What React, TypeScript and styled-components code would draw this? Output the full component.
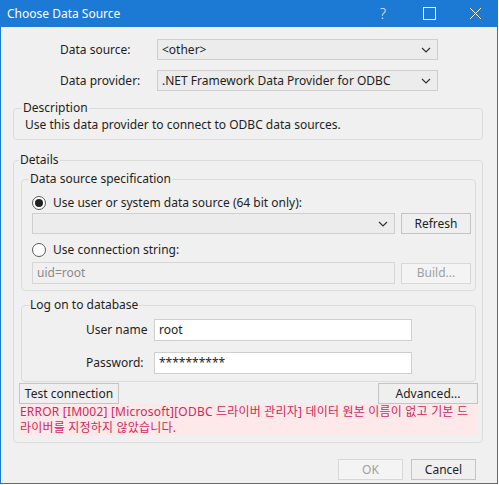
import React from "react";
import styled, { createGlobalStyle } from "styled-components";

const Global = createGlobalStyle`
  html, body { margin: 0; padding: 0; background: #ffffff; }
  body { font-family: "Noto Sans", "Noto Sans CJK KR", sans-serif; font-size: 12px; line-height: 16px; color: #1e1e1e; }
  * { box-sizing: border-box; }
`;

const Window = styled.div`
  width: 498px;
  height: 484px;
  border: 1px solid #1c79d4;
  border-top: none;
  background: #f0f0f0;
  display: flex;
  flex-direction: column;
  overflow: hidden;
`;

const TitleBar = styled.div`
  height: 27px;
  flex-shrink: 0;
  background: #1c79d4;
  color: #fff;
  display: flex;
  align-items: center;
  padding-left: 7px;
  margin: 0 -1px;
`;

const Title = styled.div`
  flex: 1;
  font-size: 12px;
`;

const TitleBtn = styled.div`
  width: 46px;
  height: 27px;
  display: flex;
  align-items: center;
  justify-content: center;
  color: #e8f1fb;
  font-size: 14px;
  font-weight: 300;
`;

const Body = styled.div`
  flex: 1;
  display: flex;
  flex-direction: column;
  padding: 12px 14px 0 12px;
`;

const FormGrid = styled.div`
  display: grid;
  grid-template-columns: 97px 281px;
  row-gap: 10px;
  padding-left: 47px;
  align-items: center;
`;

const Label = styled.div`
  color: #1e1e1e;
`;

const Combo = styled.div<{ $w?: number }>`
  height: 21px;
  width: ${(p) => (p.$w ? `${p.$w}px` : "auto")};
  border: 1px solid #cfcfcf;
  background: #ececec;
  display: flex;
  align-items: center;
  padding: 0 6px 0 4px;
  flex-shrink: 0;
`;

const ComboText = styled.div`
  flex: 1;
`;

const Group = styled.fieldset<{ $mt: number; $pad: string; $mx?: number }>`
  margin: ${(p) => p.$mt}px ${(p) => p.$mx ?? 0}px 0 ${(p) => p.$mx ?? 0}px;
  padding: ${(p) => p.$pad};
  border: 1px solid #dcdcdc;
  border-radius: 4px;
  min-width: 0;
`;

const Legend = styled.legend`
  padding: 0 1px;
  margin-left: 0;
  font-size: 12px;
  line-height: 14px;
`;

const DescText = styled.div`
  padding: 2px 0 0 3px;
`;

const Row = styled.div<{ $mt: number }>`
  display: flex;
  align-items: center;
  gap: 6px;
  margin-top: ${(p) => p.$mt}px;
`;

const RadioRow = styled.label<{ $mt?: number }>`
  display: flex;
  align-items: center;
  gap: 7px;
  height: 16px;
  margin-top: ${(p) => p.$mt ?? 0}px;
`;

const RadioCircle = styled.span<{ $on?: boolean }>`
  width: 14px;
  height: 14px;
  border-radius: 50%;
  border: 1px solid #5a5a5a;
  background: #fff;
  display: flex;
  align-items: center;
  justify-content: center;
  &::after {
    content: "";
    width: 8px;
    height: 8px;
    border-radius: 50%;
    background: #222;
    display: ${(p) => (p.$on ? "block" : "none")};
  }
`;

const Button = styled.div<{ $w: number; $disabled?: boolean }>`
  width: ${(p) => p.$w}px;
  height: 21px;
  border: 1px solid ${(p) => (p.$disabled ? "#d8d8d8" : "#c4c4c4")};
  background: ${(p) => (p.$disabled ? "#f4f4f4" : "#efefef")};
  color: ${(p) => (p.$disabled ? "#a0a0a0" : "#1e1e1e")};
  display: flex;
  align-items: center;
  justify-content: center;
  flex-shrink: 0;
`;

const TextBox = styled.div<{ $w: number; $disabled?: boolean }>`
  width: ${(p) => p.$w}px;
  height: 22px;
  border: 1px solid ${(p) => (p.$disabled ? "#d6d6d6" : "#cfcfcf")};
  background: ${(p) => (p.$disabled ? "#f0f0f0" : "#ffffff")};
  color: ${(p) => (p.$disabled ? "#8a8a8a" : "#1e1e1e")};
  display: flex;
  align-items: center;
  padding-left: 4px;
  flex-shrink: 0;
`;

const SpecBody = styled.div`
  display: flex;
  flex-direction: column;
  padding: 9px 0 0 3px;
`;

const LoginGrid = styled.div`
  display: grid;
  grid-template-columns: 68px 258px;
  row-gap: 11px;
  padding: 7px 0 0 57px;
  align-items: center;
`;

const ActionRow = styled.div`
  display: flex;
  justify-content: space-between;
  margin-top: 1px;
`;

const ErrorBox = styled.div`
  background: #fde8ea;
  color: #d3285a;
  padding: 0 1px 0 1px;
  line-height: 16px;
  height: 32px;
  word-break: break-all;
  letter-spacing: 0.2px;
`;

const Footer = styled.div`
  display: flex;
  justify-content: flex-end;
  gap: 8px;
  margin-top: 16px;
  padding-right: 7px;
`;

const Chevron = () => (
  <svg width="10" height="6" viewBox="0 0 10 6">
    <path d="M1 1 L5 5 L9 1" fill="none" stroke="#333" strokeWidth="1.2" />
  </svg>
);

export default function App() {
  return (
    <>
      <Global />
      <Window>
        <TitleBar>
          <Title>Choose Data Source</Title>
          <TitleBtn>?</TitleBtn>
          <TitleBtn>
            <svg width="13" height="13" viewBox="0 0 13 13">
              <rect x="0.5" y="0.5" width="12" height="12" fill="none" stroke="#fff" strokeWidth="1" />
            </svg>
          </TitleBtn>
          <TitleBtn>
            <svg width="13" height="13" viewBox="0 0 13 13">
              <path d="M1 1 L12 12 M12 1 L1 12" stroke="#fff" strokeWidth="1" />
            </svg>
          </TitleBtn>
        </TitleBar>
        <Body>
          <FormGrid>
            <Label>Data source:</Label>
            <Combo>
              <ComboText>&lt;other&gt;</ComboText>
              <Chevron />
            </Combo>
            <Label>Data provider:</Label>
            <Combo>
              <ComboText>.NET Framework Data Provider for ODBC</ComboText>
              <Chevron />
            </Combo>
          </FormGrid>

          <Group $mt={10} $pad="0 8px 6px 8px">
            <Legend>Description</Legend>
            <DescText>Use this data provider to connect to ODBC data sources.</DescText>
          </Group>

          <Group $mt={13} $pad="0 4px 6px 5px">
            <Legend>Details</Legend>
            <Group $mt={5} $mx={2} $pad="0 5px 6px 7px">
              <Legend>Data source specification</Legend>
              <SpecBody>
                <RadioRow>
                  <RadioCircle $on />
                  Use user or system data source (64 bit only):
                </RadioRow>
                <Row $mt={2}>
                  <Combo $w={363}>
                    <ComboText />
                    <Chevron />
                  </Combo>
                  <Button $w={70}>Refresh</Button>
                </Row>
                <RadioRow $mt={8}>
                  <RadioCircle />
                  Use connection string:
                </RadioRow>
                <Row $mt={4}>
                  <TextBox $w={363} $disabled>uid=root</TextBox>
                  <Button $w={70} $disabled>Build...</Button>
                </Row>
              </SpecBody>
            </Group>
            <Group $mt={7} $mx={2} $pad="0 8px 7px 7px">
              <Legend>Log on to database</Legend>
              <LoginGrid>
                <Label>User name</Label>
                <TextBox $w={258}>root</TextBox>
                <Label>Password:</Label>
                <TextBox $w={258}>**********</TextBox>
              </LoginGrid>
            </Group>
            <ActionRow>
              <Button $w={100}>Test connection</Button>
              <Button $w={100}>Advanced...</Button>
            </ActionRow>
            <ErrorBox>
              ERROR [IM002] [Microsoft][ODBC 드라이버 관리자] 데이터 원본 이름이 없고 기본 드라이버를 지정하지 않았습니다.
            </ErrorBox>
          </Group>

          <Footer>
            <Button $w={65} $disabled>OK</Button>
            <Button $w={65}>Cancel</Button>
          </Footer>
        </Body>
      </Window>
    </>
  );
}
